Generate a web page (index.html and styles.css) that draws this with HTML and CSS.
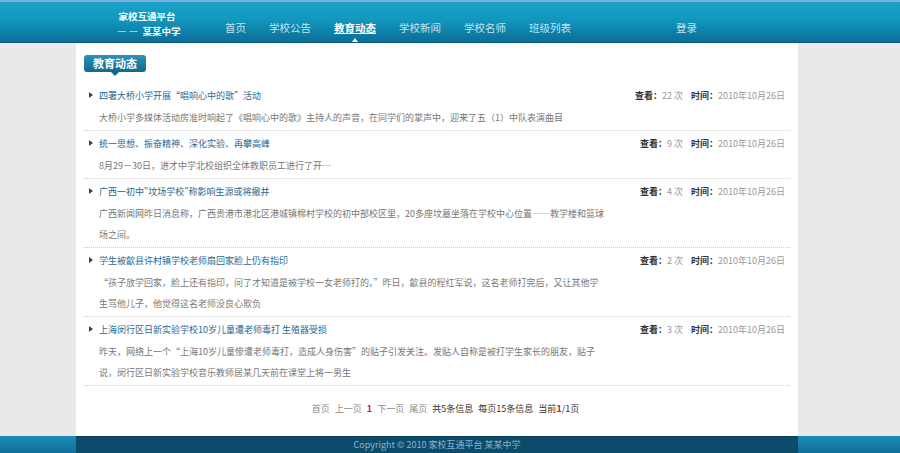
FILE: index.html
```html
<!DOCTYPE html>
<html lang="zh-CN">
<head>
<meta charset="utf-8">
<title>教育动态 - 家校互通平台</title>
<link rel="stylesheet" href="styles.css">
</head>
<body>
<header class="top">
  <div class="top-inner">
    <div class="logo">
      <div class="logo-line">家校互通平台</div>
      <div class="logo-line">— —&nbsp; 某某中学</div>
    </div>
    <nav class="nav">
      <a class="nav-item" href="#">首页</a>
      <a class="nav-item" href="#">学校公告</a>
      <a class="nav-item active" href="#">教育动态</a>
      <a class="nav-item" href="#">学校新闻</a>
      <a class="nav-item" href="#">学校名师</a>
      <a class="nav-item" href="#">班级列表</a>
    </nav>
    <a class="login" href="#">登录</a>
  </div>
</header>

<main class="page">
  <section class="panel">
    <div class="tab">教育动态</div>
    <ul class="list">
      <li class="item">
        <div class="item-head">
          <a class="item-title" href="#">四署大桥小学开展“唱响心中的歌”活动</a>
          <span class="meta"><b>查看：</b><span class="num">22 次</span><b class="time-label">时间：</b><span class="num">2010年10月26日</span></span>
        </div>
        <p class="summary">大桥小学多媒体活动房准时响起了《唱响心中的歌》主持人的声音，在同学们的掌声中，迎来了五（1）中队表演曲目</p>
      </li>
      <li class="item">
        <div class="item-head">
          <a class="item-title" href="#">统一思想、振奋精神、深化实验、再攀高峰</a>
          <span class="meta"><b>查看：</b><span class="num">9 次</span><b class="time-label">时间：</b><span class="num">2010年10月26日</span></span>
        </div>
        <p class="summary">8月29－30日，进才中学北校组织全体教职员工进行了开…</p>
      </li>
      <li class="item">
        <div class="item-head">
          <a class="item-title" href="#">广西一初中"坟场学校"称影响生源或将撤并</a>
          <span class="meta"><b>查看：</b><span class="num">4 次</span><b class="time-label">时间：</b><span class="num">2010年10月26日</span></span>
        </div>
        <p class="summary summary-wide">广西新闻网昨日消息称，广西贵港市港北区港城镇棉村学校的初中部校区里，20多座坟墓坐落在学校中心位置——教学楼和篮球场之间。</p>
      </li>
      <li class="item">
        <div class="item-head">
          <a class="item-title" href="#">学生被歙县许村镇学校老师扇回家脸上仍有指印</a>
          <span class="meta"><b>查看：</b><span class="num">2 次</span><b class="time-label">时间：</b><span class="num">2010年10月26日</span></span>
        </div>
        <p class="summary">“孩子放学回家，脸上还有指印，问了才知道是被学校一女老师打的。”昨日，歙县的程红军说，这名老师打完后，又让其他学生骂他儿子，他觉得这名老师没良心欺负</p>
      </li>
      <li class="item">
        <div class="item-head">
          <a class="item-title" href="#">上海闵行区日新实验学校10岁儿童遭老师毒打 生殖器受损</a>
          <span class="meta"><b>查看：</b><span class="num">3 次</span><b class="time-label">时间：</b><span class="num">2010年10月26日</span></span>
        </div>
        <p class="summary">昨天，网络上一个“上海10岁儿童惨遭老师毒打，造成人身伤害”的贴子引发关注。发贴人自称是被打学生家长的朋友，贴子说，闵行区日新实验学校音乐教师居某几天前在课堂上将一男生</p>
      </li>
    </ul>
    <div class="pager">
      <a class="pg-link" href="#">首页</a>
      <a class="pg-link" href="#">上一页</a>
      <b class="pg-cur">1</b>
      <a class="pg-link" href="#">下一页</a>
      <a class="pg-link" href="#">尾页</a>
      <span class="pg-info">共5条信息</span>
      <span class="pg-info">每页15条信息</span>
      <span class="pg-info">当前<b class="pg-cur">1</b>/1页</span>
    </div>
  </section>
</main>

<footer class="foot">
  <div class="foot-inner">Copyright © 2010 家校互通平台 某某中学</div>
</footer>
</body>
</html>
```

FILE: styles.css
```css
* { box-sizing: border-box; }

html, body {
  margin: 0;
  padding: 0;
}

body {
  background: #e9e9ec;
  font-family: "Noto Sans CJK SC", "Liberation Sans", sans-serif;
  font-size: 9px;
  color: #333;
}

a { text-decoration: none; }

/* header */
.top {
  height: 43px;
  background: linear-gradient(#1aa4c8 0%, #1296bd 45%, #0b6e97 100%);
  border-top: 2px solid #7eaee4;
  border-bottom: 1px solid #0a5b7e;
}

.top-inner {
  margin-left: 76px;
  width: 722px;
  height: 100%;
  display: flex;
  align-items: flex-start;
}

.logo {
  margin-left: 41px;
  margin-top: 7px;
  width: 60px;
  text-align: center;
  color: #fff;
  font-size: 9.5px;
  font-weight: bold;
  line-height: 15px;
  white-space: nowrap;
}

.nav {
  display: flex;
  gap: 23px;
  margin-left: 48px;
  margin-top: 19px;
}

.nav-item {
  position: relative;
  color: #c4e2ee;
  font-size: 10.5px;
  line-height: 14px;
}

.nav-item.active {
  color: #fff;
  font-weight: bold;
  text-decoration: underline;
}

.nav-item.active::after {
  content: "";
  position: absolute;
  left: 50%;
  top: 17px;
  margin-left: -3px;
  border-left: 3px solid transparent;
  border-right: 3px solid transparent;
  border-bottom: 4px solid #fff;
}

.login {
  margin-left: auto;
  margin-right: 101px;
  margin-top: 19px;
  color: #c4e2ee;
  font-size: 10.5px;
  line-height: 14px;
}

/* main */
.page {
  margin-left: 76px;
  width: 722px;
}

.panel {
  background: #fff;
  height: 393px;
  padding: 12px 8px 0 8px;
}

.tab {
  position: relative;
  display: inline-block;
  height: 17px;
  line-height: 17px;
  padding: 0 9px;
  border-radius: 3px;
  background: linear-gradient(#2b92b9, #12698f);
  color: #fff;
  font-size: 11px;
  font-weight: bold;
}

.tab::after {
  content: "";
  position: absolute;
  left: 50%;
  bottom: -4px;
  margin-left: -4px;
  border-left: 4px solid transparent;
  border-right: 4px solid transparent;
  border-top: 4px solid #12698f;
}

.list {
  list-style: none;
  margin: 11px 0 0 0;
  padding: 0;
}

.item {
  border-bottom: 1px dotted #cfcfcf;
  padding: 0 5px 2px 15px;
}

.item-head {
  position: relative;
  display: flex;
  justify-content: space-between;
  align-items: center;
  height: 24px;
}

.item-head::before {
  content: "";
  position: absolute;
  left: -10px;
  top: 9px;
  border-top: 3px solid transparent;
  border-bottom: 3px solid transparent;
  border-left: 4px solid #1c4d78;
}

.item-title {
  color: #1f6893;
}

.meta {
  color: #999;
}

.meta b {
  color: #333;
}

.time-label {
  margin-left: 8px;
}

.summary {
  margin: 0;
  max-width: 504px;
  line-height: 21px;
  color: #777;
}

.summary-wide {
  max-width: 509px;
}

.pager {
  margin-top: 13px;
  padding-left: 17px;
  text-align: center;
  line-height: 20px;
  color: #333;
  word-spacing: 3px;
}

.pg-link {
  color: #888;
}

.pg-cur {
  color: #d0141b;
}

/* footer */
.foot {
  height: 17px;
  background: linear-gradient(#1a8cb8, #0e6f99);
}

.foot-inner {
  margin-left: 76px;
  width: 722px;
  height: 100%;
  background: #0d4b6b;
  border-top: 1px solid #0a3f5c;
  color: #8fb2c6;
  text-align: center;
  line-height: 16px;
}
```
